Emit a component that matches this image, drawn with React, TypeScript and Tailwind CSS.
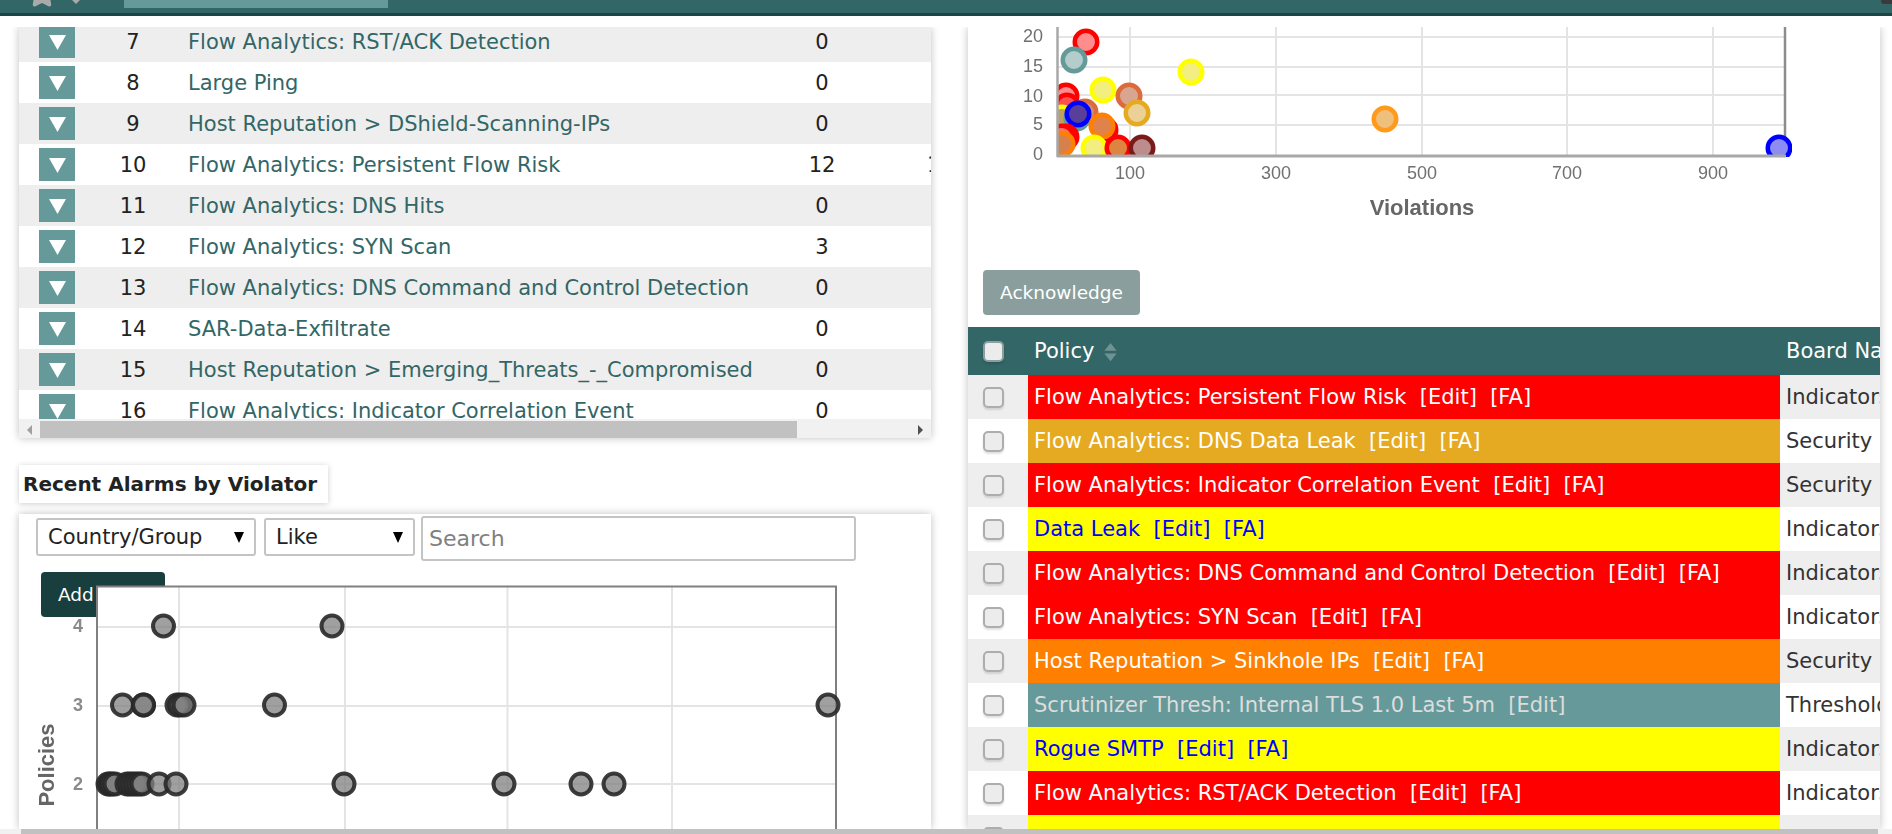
import { Star } from "lucide-react";

const alarms = [
  { id: 7, name: "Flow Analytics: RST/ACK Detection", count: "0", extra: "" },
  { id: 8, name: "Large Ping", count: "0", extra: "" },
  { id: 9, name: "Host Reputation > DShield-Scanning-IPs", count: "0", extra: "" },
  { id: 10, name: "Flow Analytics: Persistent Flow Risk", count: "12", extra: "12" },
  { id: 11, name: "Flow Analytics: DNS Hits", count: "0", extra: "" },
  { id: 12, name: "Flow Analytics: SYN Scan", count: "3", extra: "" },
  { id: 13, name: "Flow Analytics: DNS Command and Control Detection", count: "0", extra: "" },
  { id: 14, name: "SAR-Data-Exfiltrate", count: "0", extra: "" },
  { id: 15, name: "Host Reputation > Emerging_Threats_-_Compromised", count: "0", extra: "" },
  { id: 16, name: "Flow Analytics: Indicator Correlation Event", count: "0", extra: "" },
];

const policies = [
  { name: "Flow Analytics: Persistent Flow Risk", fa: true, cell: "bg-[#ff0000] text-white", board: "Indicators" },
  { name: "Flow Analytics: DNS Data Leak", fa: true, cell: "bg-[#e5aa22] text-white", board: "Security Boards" },
  { name: "Flow Analytics: Indicator Correlation Event", fa: true, cell: "bg-[#ff0000] text-white", board: "Security Boards" },
  { name: "Data Leak", fa: true, cell: "bg-[#ffff00] text-[#0000ff]", board: "Indicators" },
  { name: "Flow Analytics: DNS Command and Control Detection", fa: true, cell: "bg-[#ff0000] text-white", board: "Indicators" },
  { name: "Flow Analytics: SYN Scan", fa: true, cell: "bg-[#ff0000] text-white", board: "Indicators" },
  { name: "Host Reputation > Sinkhole IPs", fa: true, cell: "bg-[#ff8000] text-white", board: "Security Boards" },
  { name: "Scrutinizer Thresh: Internal TLS 1.0 Last 5m", fa: false, cell: "bg-[#669999] text-[#dddddd]", board: "Thresholds" },
  { name: "Rogue SMTP", fa: true, cell: "bg-[#ffff00] text-[#0000ff]", board: "Indicators" },
  { name: "Flow Analytics: RST/ACK Detection", fa: true, cell: "bg-[#ff0000] text-white", board: "Indicators" },
  { name: "", fa: false, cell: "bg-[#ffff00] text-[#0000ff]", board: "" },
];

// page coordinates, the svg viewBoxes below use the same numbers
const severityDots: [number, number, string, string][] = [
  [1086, 42, "#ff0000", "#ff8d8d"],
  [1074, 60, "#669999", "#b3cccc"],
  [1191, 72, "#ffff00", "#f2ee80"],
  [1103, 90, "#ffff00", "#f2ee80"],
  [1129, 96, "#dd6a3a", "#d8a690"],
  [1137, 113, "#e5aa22", "#ecd196"],
  [1066, 96, "#ff0000", "#ff8d8d"],
  [1067, 106, "#ff0000", "#ff5050"],
  [1085, 112, "#dd6a3a", "#c89070"],
  [1062, 118, "#ffff00", "#c0a060"],
  [1077, 118, "#669999", "#7f9f9f"],
  [1078, 114, "#0000ff", "#5a3f9a"],
  [1066, 137, "#ff0000", "#ff7070"],
  [1105, 130, "#ff0000", "#e87050"],
  [1102, 126, "#ff8000", "#e0824c"],
  [1062, 137, "#ff0000", "#ff7070"],
  [1062, 144, "#ff8000", "#d8804c"],
  [1094, 148, "#ffff00", "#f2ee80"],
  [1118, 148, "#ff0000", "#dc8440"],
  [1142, 148, "#7b1a1a", "#bd8c8c"],
  [1385, 119, "#ff9a1a", "#efbf7c"],
  [1779, 148, "#0000ff", "#8c8cf2"],
];

const violatorDots: [number, number][] = [
  [163.5, 626], [332, 626],
  [122.5, 705], [143.5, 705], [143.5, 705], [177, 705], [180, 705], [184, 705], [274.5, 705], [828, 705],
  [108, 784], [110, 784], [112, 784], [115, 784], [127, 784], [130, 784], [133, 784], [136, 784], [139, 784], [142, 784],
  [159, 784], [176, 784],
  [344, 784], [504, 784], [581, 784], [614, 784],
];

function SeverityChart() {
  return (
    <svg viewBox="968 27 912 243" className="block h-[243px] w-[912px] blur-[0.4px]">
      <defs>
        <clipPath id="severity-area">
          <rect x="1057" y="20" width="735" height="137" />
        </clipPath>
      </defs>
      {[37, 67, 95, 125].map((y) => (
        <line key={y} x1="1057" x2="1785" y1={y} y2={y} stroke="#e4e4e4" strokeWidth="2" />
      ))}
      {[1130, 1276, 1422, 1567, 1713].map((x) => (
        <line key={x} x1={x} x2={x} y1="20" y2="157" stroke="#e4e4e4" strokeWidth="2" />
      ))}
      <line x1="1785" x2="1785" y1="20" y2="157" stroke="#8c8c8c" strokeWidth="2.5" />
      <g clipPath="url(#severity-area)">
        {severityDots.map(([x, y, stroke, fill], i) => (
          <circle key={i} cx={x} cy={y} r="11.25" fill={fill} stroke={stroke} strokeWidth="4.5" />
        ))}
      </g>
      <line x1="1057.5" x2="1057.5" y1="20" y2="157" stroke="#a8a8a8" strokeWidth="2.5" />
      <line x1="1057" x2="1786" y1="156" y2="156" stroke="#a8a8a8" strokeWidth="3" />
      <g fontFamily="'Liberation Sans', Arial, sans-serif" fontSize="18" fill="#707070">
        {[
          ["20", 42],
          ["15", 72],
          ["10", 102],
          ["5", 130],
          ["0", 160],
        ].map(([label, y]) => (
          <text key={label} x="1043" y={y} textAnchor="end">
            {label}
          </text>
        ))}
        {[
          ["100", 1130],
          ["300", 1276],
          ["500", 1422],
          ["700", 1567],
          ["900", 1713],
        ].map(([label, x]) => (
          <text key={label} x={x} y="179" textAnchor="middle">
            {label}
          </text>
        ))}
      </g>
      <text x="1422" y="215" textAnchor="middle" fontFamily="'Liberation Sans', Arial, sans-serif" fontSize="22" fontWeight="700" fill="#666666">
        Violations
      </text>
    </svg>
  );
}

function ViolatorChart() {
  return (
    <svg viewBox="30 580 820 249" className="absolute left-[11px] top-[66px] h-[249px] w-[820px] blur-[0.4px]">
      <rect x="97" y="586" width="739" height="243" fill="#ffffff" />
      {[627, 706, 784].map((y) => (
        <line key={y} x1="97" x2="836" y1={y} y2={y} stroke="#e4e4e4" strokeWidth="2" />
      ))}
      {[179, 345, 507.5, 672].map((x) => (
        <line key={x} x1={x} x2={x} y1="586" y2="829" stroke="#e4e4e4" strokeWidth="2" />
      ))}
      <path d="M97 829V586.5H836V829" fill="none" stroke="#808080" strokeWidth="2" />
      {violatorDots.map(([x, y], i) => (
        <circle key={i} cx={x} cy={y} r="10.5" fill="rgba(128,128,128,0.75)" stroke="rgba(40,40,40,0.9)" strokeWidth="4" />
      ))}
      <g fontFamily="'Liberation Sans', Arial, sans-serif" fontSize="18" fontWeight="700" fill="#8a8a8a">
        <text x="78" y="632" textAnchor="middle">4</text>
        <text x="78" y="711" textAnchor="middle">3</text>
        <text x="78" y="790" textAnchor="middle">2</text>
      </g>
      <text
        transform="translate(54 765) rotate(-90)"
        textAnchor="middle"
        fontFamily="'Liberation Sans', Arial, sans-serif"
        fontSize="22"
        fontWeight="700"
        fill="#666666"
      >
        Policies
      </text>
    </svg>
  );
}

function FakeSelect({ label, className }: { label: string; className: string }) {
  return (
    <div className={`relative ${className}`}>
      <select className="h-full w-full appearance-none rounded-[3px] border-2 border-[#c4c4c4] bg-white pl-[10px] pt-[2px] text-[21px] text-[#222]">
        <option>{label}</option>
      </select>
      <svg viewBox="0 0 10 11" className="pointer-events-none absolute right-[12px] top-[14px] h-[11px] w-[10px]">
        <polygon points="0,0 10,0 5,11" fill="#000000" />
      </svg>
    </div>
  );
}

function Checkbox({ head }: { head?: boolean }) {
  return (
    <input
      type="checkbox"
      className={`h-[21px] w-[21px] appearance-none rounded-[5px] border-2 bg-[#ececec] shadow-[0_2px_2px_rgba(0,0,0,0.12)] ${head ? "border-[#8e9e9e]" : "border-[#adadad]"}`}
    />
  );
}

export default function App() {
  return (
    <div className="flex h-[834px] w-[1892px] flex-col overflow-hidden bg-white font-['DejaVu_Sans',sans-serif]">
      {/* top bar, cut off by the scroll position */}
      <div className="flex h-[16px] shrink-0 items-start overflow-hidden border-b-[3px] border-[#1c4545] bg-[#336666] pl-[27px]">
        <Star size={30} fill="#aaaaaa" stroke="#aaaaaa" className="-mt-[21px] shrink-0" />
        <svg viewBox="0 0 8 4" className="ml-[15px] h-[4px] w-[8px] shrink-0">
          <polygon points="0,0 8,0 4,4" fill="#aaaaaa" />
        </svg>
        <div className="ml-[44px] h-[8px] w-[264px] bg-[#669999]" />
        <div className="ml-auto h-[4px] w-[11px] rounded-bl-[3px] bg-[#3a3a3a]" />
      </div>

      {/* overflow clips the panels' shadow along the top, they scroll under the bar */}
      <div className="mt-[11px] flex min-h-0 flex-1 overflow-hidden pl-[19px]">
        {/* left column */}
        <div className="flex w-[912px] flex-col">
          <div className="h-[411px] shrink-0 overflow-hidden bg-white shadow-[0_0_8px_rgba(0,0,0,0.25)]">
            <div className="-mt-[6px] h-[398px] overflow-hidden">
              {alarms.map((a, i) => (
                <div key={a.id} className={`flex h-[41px] items-center text-[21px] ${i % 2 === 0 ? "bg-[#eeeeee]" : "bg-white"}`}>
                  <div className="ml-[20px] flex h-[33px] w-[36px] shrink-0 items-center justify-center bg-[#669999]">
                    <svg viewBox="0 0 17 15" className="mt-[2px] h-[15px] w-[17px]">
                      <polygon points="0,0 17,0 8.5,15" fill="#ffffff" />
                    </svg>
                  </div>
                  <div className="w-[113px] shrink-0 pl-[3px] pt-[2px] text-center text-[#222]">{a.id}</div>
                  <div className="w-[594px] shrink-0 whitespace-nowrap pt-[2px] text-[#336666]">{a.name}</div>
                  <div className="w-[80px] shrink-0 pt-[2px] text-center text-[#222]">{a.count}</div>
                  <div className="ml-[65px] w-[24px] shrink-0 pt-[2px] text-center text-[#222]">{a.extra}</div>
                </div>
              ))}
            </div>
            <div className="flex h-[19px] items-end justify-between bg-[#f1f1f1]">
              <span className="flex h-[17px] w-[21px] items-center justify-center">
                <span className="h-0 w-0 border-y-[5px] border-r-[5px] border-y-transparent border-r-[#a0a0a0]" />
              </span>
              <div className="h-[17px] w-[757px] bg-[#c1c1c1]" />
              <div className="flex-1" />
              <span className="flex h-[17px] w-[21px] items-center justify-center">
                <span className="h-0 w-0 border-y-[5px] border-l-[5px] border-y-transparent border-l-[#505050]" />
              </span>
            </div>
          </div>

          <h3 className="mt-[27px] flex h-[38px] w-[309px] shrink-0 items-center whitespace-nowrap bg-white pl-[4px] text-[20px] font-bold text-[#222] shadow-[0_1px_6px_rgba(0,0,0,0.2)]">
            Recent Alarms by Violator
          </h3>

          <div className="relative mt-[11px] min-h-0 flex-1 overflow-hidden bg-white pl-[17px] pt-[2px] shadow-[0_0_8px_rgba(0,0,0,0.25)]">
            <div className="flex items-start">
              <FakeSelect label="Country/Group" className="mt-[2px] h-[38px] w-[220px]" />
              <FakeSelect label="Like" className="ml-[8px] mt-[2px] h-[38px] w-[151px]" />
              <input
                placeholder="Search"
                className="ml-[6px] h-[45px] w-[435px] rounded-[3px] border-2 border-[#c4c4c4] bg-white pl-[6px] text-[22px] placeholder:text-[#808080]"
              />
            </div>
            <button className="ml-[5px] mt-[11px] flex h-[45px] w-[124px] items-center whitespace-nowrap rounded-[4px] bg-[#183e3e] pl-[17px] text-[18.5px] text-white">
              Add Filter
            </button>
            <ViolatorChart />
          </div>
        </div>

        {/* right column */}
        <div className="ml-[37px] w-[912px] overflow-hidden bg-white shadow-[0_0_8px_rgba(0,0,0,0.25)]">
          <SeverityChart />
          <button className="ml-[15px] h-[45px] w-[157px] rounded-[4px] bg-[#8a9f9d] text-[18.5px] text-white">Acknowledge</button>
          <div className="mt-[12px] flex h-[48px] items-center bg-[#336666] text-[21px] text-white">
            <div className="flex w-[60px] shrink-0 justify-center pr-[9px]">
              <Checkbox head />
            </div>
            <div className="flex w-[752px] shrink-0 items-center pl-[6px] pt-[2px]">
              Policy
              <svg viewBox="0 0 16 24" className="ml-[8px] h-[21px] w-[17px]" fill="#6f9393">
                <path d="M8 1l7 9H1zM1 13h14l-7 9z" />
              </svg>
            </div>
            <div className="whitespace-nowrap pl-[6px] pt-[2px]">Board Name</div>
          </div>
          {policies.map((p, i) => (
            <div key={i} className={`flex h-[44px] items-stretch text-[21px] ${i % 2 === 0 ? "bg-[#eeeeee]" : "bg-white"}`}>
              <div className="flex w-[60px] shrink-0 items-center justify-center pr-[9px]">
                <Checkbox />
              </div>
              <div className={`flex w-[752px] shrink-0 items-center whitespace-pre pl-[6px] pt-[2px] ${p.cell}`}>
                {p.name && (
                  <span>
                    {p.name}
                    {"  [Edit]"}
                    {p.fa && "  [FA]"}
                  </span>
                )}
              </div>
              <div className="flex items-center whitespace-nowrap pl-[6px] pt-[2px] text-[#333]">{p.board}</div>
            </div>
          ))}
        </div>
      </div>

      {/* page scrollbar */}
      <div className="h-[5px] shrink-0 bg-[#f1f1f1] pl-[21px]">
        <div className="h-full w-[1857px] bg-[#c1c1c1]" />
      </div>
    </div>
  );
}
